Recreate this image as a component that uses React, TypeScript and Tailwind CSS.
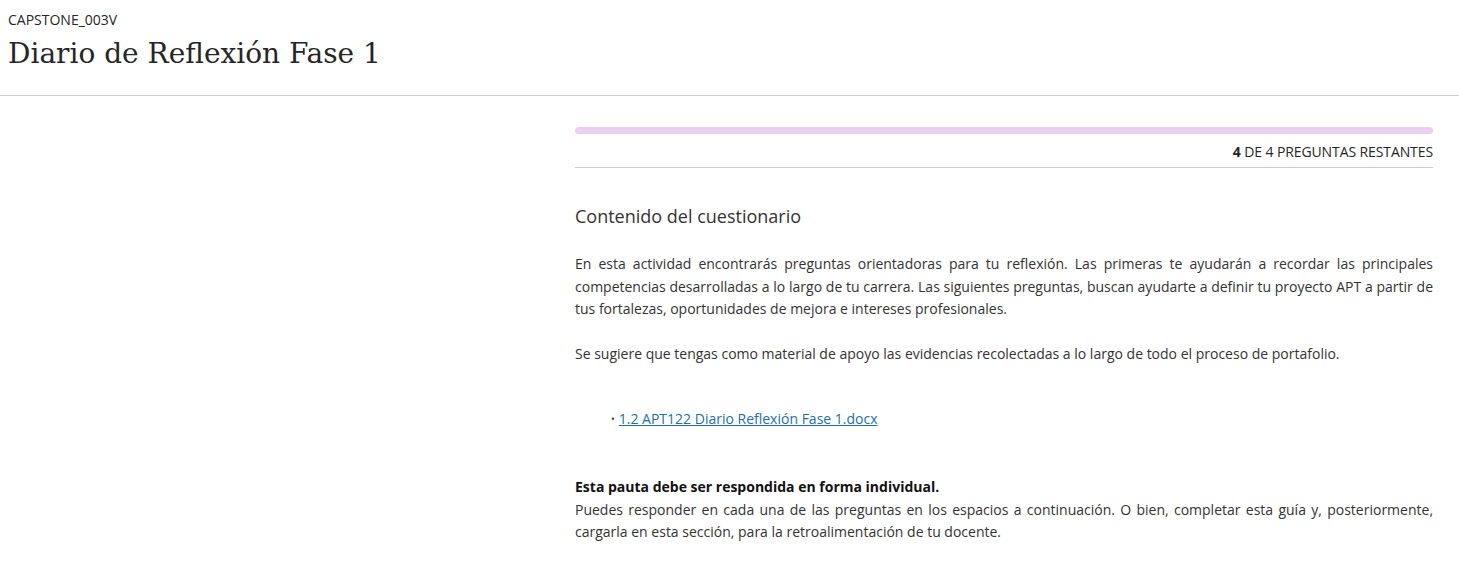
import React from 'react';

const sans = { fontFamily: '"Open Sans", "Noto Sans", sans-serif' };

const App: React.FC = () => {
  return (
    <div className="min-h-screen bg-white text-[#262626]" style={sans}>
      {/* Header */}
      <div className="border-b border-[#cdcdcd] px-2 pt-[10px] pb-[22px]">
        <div className="text-[14px] leading-[19px] text-[#262626]">CAPSTONE_003V</div>
        <h1
          className="mt-[6px] text-[28px] leading-[38px] text-[#262626]"
          style={{ fontFamily: '"DejaVu Serif", "Liberation Serif", serif' }}
        >
          Diario de Reflexión Fase 1
        </h1>
      </div>

      {/* Body */}
      <div className="flex">
        <div className="w-[575px] shrink-0" />
        <div className="w-[858px] pt-[31px]">
          <div className="h-[7px] rounded-full bg-[#ebcff1]" />
          <div className="mt-[9px] flex justify-end border-b border-[#cdcdcd] pb-[6px] text-[14px] leading-[18px] tracking-[-0.1px] text-[#262626]">
            <span>
              <b className="font-bold">4</b> DE 4 PREGUNTAS RESTANTES
            </span>
          </div>

          <h2 className="mt-[36px] text-[18px] leading-[25px] text-[#333333]">Contenido del cuestionario</h2>

          <div className="mt-[24px] text-[14px] leading-[22.5px] text-[#333333]">
            <p className="text-justify">
              En esta actividad encontrarás preguntas orientadoras para tu reflexión. Las primeras te ayudarán a recordar las principales competencias desarrolladas a lo largo de tu carrera. Las siguientes preguntas, buscan ayudarte a definir tu proyecto APT a partir de tus fortalezas, oportunidades de mejora e intereses profesionales.
            </p>
            <p className="mt-[22.5px]">
              Se sugiere que tengas como material de apoyo las evidencias recolectadas a lo largo de todo el proceso de portafolio.
            </p>
            <ul className="mt-[42px] pl-[36px]">
              <li className="flex items-center gap-[4px]">
                <span className="text-[10px]">•</span>
                <a href="#" className="text-[#1f6fa6] underline">1.2 APT122 Diario Reflexión Fase 1.docx</a>
              </li>
            </ul>
            <p className="mt-[46px] font-bold text-[#111111]">Esta pauta debe ser respondida en forma individual.</p>
            <p className="text-justify">
              Puedes responder en cada una de las preguntas en los espacios a continuación. O bien, completar esta guía y, posteriormente, cargarla en esta sección, para la retroalimentación de tu docente.
            </p>
          </div>
        </div>
      </div>
    </div>
  );
};

export default App;
